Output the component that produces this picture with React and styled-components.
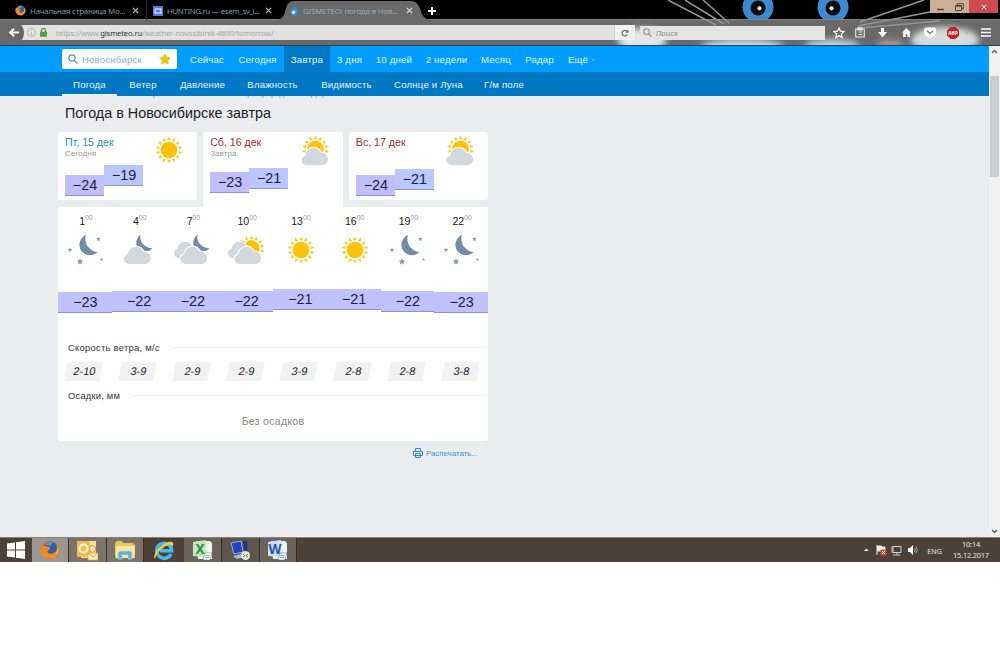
import React from "react";
import styled, { createGlobalStyle } from "styled-components";
import { FaStar } from "react-icons/fa";

const GlobalStyle = createGlobalStyle`
  * { box-sizing: border-box; }
  body {
    margin: 0;
    background: #fff;
    overflow: hidden;
    font-family: "Liberation Sans", Arial, sans-serif;
  }
  svg { display: block; flex: none; }
`;

const Screen = styled.div`
  width: 1000px;
  height: 562px;
  display: flex;
  flex-direction: column;
  overflow: hidden;
`;

/* ---------- browser ---------- */

const Browser = styled.div`
  position: relative;
  height: 46px;
  flex: none;
  background: #000;
  border-bottom: 1px solid #1d4560;
  font-family: "Noto Sans", sans-serif;
`;

const ThemeArt = styled.svg`
  position: absolute;
  top: 0;
  left: 0;
`;

const TabStrip = styled.div`
  position: relative;
  display: flex;
  height: 19px;
  padding-left: 8px;
`;

const Tab = styled.div`
  display: flex;
  align-items: center;
  width: ${(p) => p.$width}px;
  height: 20px;
  padding: 1px ${(p) => p.$right || 7}px 0 ${(p) => p.$left}px;
  gap: 4px;
  color: ${(p) => (p.$active ? "#93adc0" : "#7f98ab")};
  font-size: 7.9px;
  white-space: nowrap;
  border-right: ${(p) => (p.$divider ? "1px solid #26282b" : "0")};
`;

const TabTitle = styled.span`
  flex: 1;
  letter-spacing: ${(p) => p.$spacing || 0}px;
`;

const NewTab = styled.div`
  display: flex;
  align-items: center;
  padding: 2px 0 0 6px;
`;

const WindowButtons = styled.div`
  display: flex;
  height: 13px;
  margin-left: auto;
  margin-right: 2px;
`;

const WindowButton = styled.div`
  display: flex;
  align-items: center;
  justify-content: center;
  width: ${(p) => p.$width}px;
  background: ${(p) => (p.$close ? "#cf4b50" : "#cdae92")};
`;

const Toolbar = styled.div`
  position: relative;
  display: flex;
  align-items: center;
  height: 26px;
  padding-top: 1px;
`;

const BackButton = styled.div`
  position: relative;
  z-index: 1;
  display: flex;
  flex: none;
  align-items: center;
  justify-content: center;
  width: 24px;
  height: 24px;
  border-radius: 50%;
  background: #696969;
  padding-left: 3px;
`;

const UrlBar = styled.div`
  display: flex;
  flex: none;
  align-items: center;
  width: 615px;
  height: 15px;
  margin-left: -4px;
  padding-left: 7px;
  background: #e2e2e2;
  color: #a9a9a9;
  font-size: 7.6px;
  letter-spacing: -0.13px;

  b {
    font-weight: 400;
    color: #303030;
  }
`;

const UrlIcons = styled.div`
  display: flex;
  align-items: center;
  gap: 4px;
  width: 29px;
`;

const Reload = styled.div`
  display: flex;
  align-items: center;
  justify-content: center;
  width: 21px;
  height: 15px;
  margin-left: auto;
  border-left: 1px solid #d0d0d0;
  background: #f0f0f0;
`;

const SearchBar = styled.div`
  display: flex;
  flex: none;
  align-items: center;
  gap: 4px;
  width: 185px;
  height: 14px;
  margin-left: 5px;
  padding-left: 3px;
  background: #e4e4e4;
  color: #8b8b8b;
  font-size: 8px;
  font-style: italic;
`;

const ToolIcons = styled.div`
  display: flex;
  align-items: center;
  margin-left: 2px;
`;

const ToolIcon = styled.div`
  display: flex;
  flex: none;
  align-items: center;
  justify-content: center;
  width: ${(p) => p.$width}px;
`;

/* ---------- site ---------- */

const Nav = styled.div`
  display: flex;
  flex: none;
  height: 26px;
  padding-left: 62px;
  background: #009dff;
`;

const CityBox = styled.div`
  display: flex;
  align-items: center;
  width: 115px;
  height: 20px;
  margin: 3px 6px 0 0;
  padding: 0 6px;
  gap: 4px;
  border-radius: 2px;
  background: #fff;
  color: #86b0cc;
  font-size: 9.5px;
  letter-spacing: 0.22px;
`;

const CityName = styled.span`
  flex: 1;
`;

const NavItem = styled.div`
  display: flex;
  align-items: center;
  justify-content: center;
  gap: 3px;
  width: ${(p) => p.$width}px;
  padding-top: 1px;
  background: ${(p) => (p.$active ? "#0078c4" : "transparent")};
  color: #e4f5ff;
  font-size: 9.6px;
  letter-spacing: 0.2px;
  white-space: nowrap;
`;

const SubNav = styled.div`
  display: flex;
  flex: none;
  height: 24px;
  padding-left: 62px;
  background: #0077c3;
`;

const SubItem = styled(NavItem)`
  padding: 2px 0 0;
  background: none;
  border-bottom: 2px solid ${(p) => (p.$active ? "#e9f2f8" : "transparent")};
`;

const Page = styled.div`
  display: flex;
  flex: none;
  justify-content: space-between;
  height: 441px;
  background: #ebecee;
`;

const Content = styled.div`
  width: 430px;
  margin-left: 58px;
`;

const Crumbs = styled.div`
  display: flex;
  align-items: flex-end;
  height: 2px;
  padding-left: 59px;
  overflow: hidden;
  color: #8e9399;
  font-size: 7.9px;
  line-height: 9px;
  white-space: nowrap;
`;

const Title = styled.h1`
  margin: 0;
  height: 34px;
  padding: 5px 0 0 7px;
  color: #222;
  font-size: 14.350px;
  font-weight: 400;
  line-height: 20px;
  white-space: nowrap;
`;

const Days = styled.div`
  display: flex;
  gap: 6px;
  height: 75px;
`;

const DayCard = styled.div`
  display: grid;
  grid-template-columns: 1fr 30px;
  grid-template-rows: 33px 1fr;
  width: ${(p) => (p.$active ? 140 : 139.5)}px;
  height: ${(p) => (p.$active ? 76 : 68)}px;
  padding: 3px 12px 0 7px;
  border-radius: ${(p) => (p.$active ? "3px 3px 0 0" : "3px")};
  background: #fff;
`;

const DayName = styled.div`
  color: ${(p) => (p.$weekend ? "#ab2a2a" : "#2a8fb8")};
  font-size: 10.6px;
  line-height: 14px;
  white-space: nowrap;
`;

const DayNote = styled.div`
  color: #999;
  font-size: 8.1px;
  line-height: 9px;
`;

const DayTemps = styled.div`
  display: flex;
  align-items: flex-start;
`;

const Temp = styled.div`
  width: ${(p) => p.$width || 53.75}px;
  height: 21px;
  margin-top: ${(p) => p.$top}px;
  padding: 1px 0 0 1px;
  border-bottom: 1px solid #8e90cf;
  background: ${(p) => p.$color || "#bfc2ff"};
  color: #20203c;
  font-size: 14.4px;
  line-height: 19px;
  text-align: center;
`;

const Forecast = styled.div`
  height: 234px;
  padding-top: 7px;
  border-radius: 0 0 3px 3px;
  background: #fff;
`;

const Row = styled.div`
  display: grid;
  grid-template-columns: repeat(8, 53.75px);
  height: ${(p) => p.$height}px;
  padding-left: ${(p) => p.$shift || 0}px;
  justify-items: center;
`;

const Hour = styled.div`
  display: flex;
  color: #222;
  font-size: 10.6px;
  line-height: 14px;

  sup {
    color: #999;
    font-size: 6.8px;
    line-height: 8px;
  }
`;

const TempRow = styled.div`
  display: flex;
  height: 51px;
`;

const Label = styled.div`
  display: flex;
  align-items: center;
  gap: 11px;
  height: 14px;
  padding-left: 10px;
  color: #333;
  font-size: 9.4px;
  letter-spacing: ${(p) => p.$spacing}px;
  white-space: nowrap;

  &::after {
    content: "";
    flex: 1;
    height: 1px;
    background: #f1f1f2;
  }
`;

const Wind = styled.div`
  width: 35px;
  height: 19px;
  margin: 8px 2px 0 0;
  padding-left: 2px;
  transform: skewX(-10deg);
  background: #f2f2f3;
  color: #222;
  font-size: 11px;
  line-height: 19px;
  text-align: center;
`;

const NoRain = styled.div`
  padding-top: 12px;
  color: #888;
  font-size: 10.6px;
  line-height: 14px;
  letter-spacing: 0.25px;
  text-align: center;
`;

const Print = styled.div`
  display: flex;
  align-items: center;
  justify-content: flex-end;
  gap: 3px;
  height: 24px;
  padding-right: 10px;
  color: #3796d0;
  font-size: 7.9px;
`;

const ScrollBar = styled.div`
  display: flex;
  flex-direction: column;
  align-items: center;
  justify-content: space-between;
  width: 11px;
  height: 491px;
  margin-top: -50px;
  padding: 3px 0;
  background: #f0f0f0;
`;

const Thumb = styled.div`
  width: 9px;
  height: 101px;
  margin: 22px 0 auto;
  background: #cbcccd;
`;

/* ---------- taskbar ---------- */

const Taskbar = styled.div`
  display: flex;
  flex: none;
  height: 25px;
  background: #4c4037;
  border-top: 1px solid #85807b;
  color: #e8e6e4;
  font-family: "Noto Sans", sans-serif;
`;

const Task = styled.div`
  display: flex;
  align-items: center;
  justify-content: center;
  width: ${(p) => p.$width}px;
  background: ${(p) => p.$bg || "transparent"};
  border-right: 1px solid ${(p) => (p.$bg ? "#37302a" : "transparent")};
`;

const Tray = styled.div`
  display: flex;
  align-items: center;
  margin-left: auto;
  padding-right: 11px;
`;

const Lang = styled.span`
  margin: 1px 11px 0 9px;
  font-size: 7.2px;
`;

const Clock = styled.div`
  width: 36px;
  font-size: 7.4px;
  line-height: 11px;
  letter-spacing: -0.2px;
  text-align: center;
  white-space: nowrap;
`;

/* ---------- drawings ---------- */

const Close = ({ size = 7, color = "#b7bcc0" }) => (
  <svg width={size} height={size} viewBox="0 0 8 8">
    <path d="M1 1l6 6M7 1L1 7" stroke={color} strokeWidth="1.3" />
  </svg>
);

const FirefoxIcon = ({ size }) => (
  <svg width={size} height={size} viewBox="0 0 20 20">
    <circle cx="10" cy="10" r="9" fill="#e5641a" />
    <circle cx="10.5" cy="8" r="6.4" fill="#2b61a8" />
    <path d="M5 5c2-3 6-4 9-2-2 0-3 1-3 3z" fill="#5c9ad6" />
    <path
      d="M1.5 5c1 1 2 1 4 1 2 0 3 1 5 2-1 2-3 2-3 4 2 3 6 2 9-1 1-2 1-4 0-6 3 3 3 7 1 10-4 5-11 5-15 0C.5 12 .7 8 1.5 5z"
      fill="#f08b20"
    />
    <path d="M16.5 5c2 4 1 8-2 10 4-1 5-6 2-10z" fill="#ffd44a" />
  </svg>
);

const RAYS = Array.from({ length: 14 }, (_, i) => (i * 360) / 14);

const SunShape = ({ cx, cy, scale = 1 }) => (
  <g transform={`translate(${cx} ${cy}) scale(${scale})`}>
    <circle r="8.7" fill="#ffc20a" />
    {RAYS.map((a) => (
      <path key={a} d="M-1.7 -10.2L0 -14.4L1.7 -10.2Z" fill="#f2cd24" transform={`rotate(${a})`} />
    ))}
  </g>
);

const CLOUD =
  "M5.5 18C2.3 18 0 15.9 0 13.1c0-2.3 1.5-4 3.7-4.6C4 4 7.5.9 12 .9c3.5 0 6.4 1.9 7.7 4.8C23.5 5.4 26.5 8.1 26.5 12c0 3.5-2.5 6-6 6z";

const Cloud = ({ x, y, scale = 1, outline }) => (
  <path
    d={CLOUD}
    transform={`translate(${x} ${y}) scale(${scale})`}
    fill="#d1d8de"
    stroke={outline ? "#fff" : "none"}
    strokeWidth="2"
    paintOrder="stroke"
  />
);

const STAR = "M0-2.9L.9-1 3-.8 1.4.6 1.9 2.7 0 1.6-1.9 2.7-1.4.6-3-.8-.9-1Z";

const MoonStars = () => (
  <>
    <path d="M21 1A10.5 10.5 0 1 0 32.5 18A13 13 0 0 1 21 1Z" fill="#718ca8" />
    {[[33.3, 5, 0.75], [5, 15.8, 0.75], [15, 27.5, 1.1], [36.5, 25.5, 0.5]].map(([x, y, s]) => (
      <path key={x} d={STAR} transform={`translate(${x} ${y}) scale(${s})`} fill="#8296ac" />
    ))}
  </>
);

const MoonBehind = ({ x }) => (
  <path
    d="M4.5 0A10 10 0 0 0 2 14C6 18 13 18 16.5 14C9 13 3 8 4.5 0Z"
    transform={`translate(${x} .5)`}
    fill="#718ca8"
  />
);

const WeatherIcon = ({ kind }) => (
  <svg width="42" height="32" viewBox="0 0 42 32">
    {kind === "sun" && <SunShape cx={21} cy={16} scale={0.96} />}
    {kind === "night" && <MoonStars />}
    {kind === "nightCloud" && (
      <>
        <MoonBehind x={17} />
        <Cloud x={5} y={12} outline />
      </>
    )}
    {kind === "nightClouds" && (
      <>
        <MoonBehind x={21} />
        <Cloud x={2} y={7} scale={0.94} outline />
        <Cloud x={8.5} y={12} outline />
      </>
    )}
    {kind === "dayClouds" && (
      <>
        <SunShape cx={25.5} cy={14.5} scale={0.94} />
        <Cloud x={2} y={7} scale={0.94} outline />
        <Cloud x={8.5} y={12} outline />
      </>
    )}
    {kind === "sunCloud" && (
      <>
        <SunShape cx={21.5} cy={15} scale={0.96} />
        <Cloud x={7.5} y={13.2} outline />
      </>
    )}
  </svg>
);

const DayIcon = styled.div`
  margin: -1px 0 0 -7px;
`;

const Magnifier = ({ size, color }) => (
  <svg width={size} height={size} viewBox="0 0 10 10" fill="none" stroke={color} strokeWidth="1.2">
    <circle cx="4" cy="4" r="3.2" />
    <path d="M6.4 6.4L9.5 9.5" />
  </svg>
);

const CatTheme = () => (
  <ThemeArt width="1000" height="45" viewBox="0 0 1000 45">
    <defs>
      <filter id="fur" x="-20%" y="-50%" width="140%" height="200%">
        <feGaussianBlur stdDeviation="3" />
      </filter>
      <clipPath id="bar">
        <rect y="19" width="1000" height="26" />
      </clipPath>
    </defs>
    {[758, 833].map((x) => (
      <g key={x}>
        <circle cx={x} cy="7" r="15.5" fill="#3f87cf" />
        <circle cx={x} cy="8" r="7.5" fill="#070b10" />
        <circle cx={x === 758 ? 759.5 : 831.5} cy="8.3" r="2.1" fill="#f3ead6" />
      </g>
    ))}
    <rect y="19" width="1000" height="26" fill="#696969" />
    <rect y="19" width="1000" height="1" fill="#858585" />
    {/* selected tab */}
    <path d="M277 20Q284 19 285.500 10Q287 1 294 1H411Q418 1 420.500 10Q422.500 19 430 20Z" fill="#696969" />
    <g clipPath="url(#bar)">
      <g filter="url(#fur)">
        <ellipse cx="642" cy="40" rx="24" ry="12" fill="#dfe9e9" />
        <ellipse cx="742" cy="47" rx="42" ry="8" fill="#c9d8da" />
        <ellipse cx="832" cy="47" rx="28" ry="8" fill="#c4ced0" />
        <ellipse cx="945" cy="40" rx="34" ry="13" fill="#d5dddc" />
        <ellipse cx="890" cy="44" rx="14" ry="4" fill="#b09a94" />
      </g>
    </g>
    <g stroke="#969696" strokeWidth="1.5">
      <path d="M668 0L716 25M685 0L724 24M703 0L729 23" />
      <path d="M924 0L860 22M930 12L858 26M940 21L860 28" />
    </g>
  </ThemeArt>
);

const toolbarIcons = [
  [24, <svg width="12" height="12" viewBox="0 0 12 12"><path d="M6 1l1.5 3.2 3.5.4-2.6 2.4.7 3.5L6 8.8 2.9 10.5 3.6 7 1 4.6l3.5-.4z" fill="none" stroke="#fff" strokeWidth="1.2" /></svg>],
  [18, <svg width="10" height="11" viewBox="0 0 10 11"><path d="M.7 2h8.6v8H.7zM3 .7h4V3H3zM3.5 5h4M3.5 7.5h4" fill="none" stroke="#ededed" strokeWidth="1.1" /></svg>],
  [27, <svg width="9" height="10" viewBox="0 0 9 10"><path d="M3 0h3v4h3L4.5 9.5 0 4h3z" fill="#fff" /></svg>],
  [20, <svg width="9" height="9" viewBox="0 0 10 10"><path d="M5 0l5 5H8.7v5H6V7H4v3H1.3V5H0z" fill="#fff" /></svg>],
  [27, <svg width="12" height="11" viewBox="0 0 12 11"><path d="M1.500.5h9L12 2v3a6 5.500 0 0 1-12 0V2z" fill="#fff" /><path d="M3 3.700l3 2.800 3-2.800" fill="none" stroke="#777" strokeWidth="1.4" /></svg>],
  [20, <svg width="12" height="12" viewBox="0 0 12 12"><path d="M3.5 0h5L12 3.5v5L8.5 12h-5L0 8.5v-5z" fill="#c6202a" /><text x="6" y="7.8" textAnchor="middle" fontSize="4.8" fontWeight="700" fill="#fff">ABP</text></svg>],
  [8, <svg width="6" height="5" viewBox="0 0 5 4"><path d="M.5.5l2 2.5 2-2.5" fill="none" stroke="#a9b1b1" /></svg>],
  [29, <svg width="10" height="9" viewBox="0 0 10 9"><path d="M0 1h10M0 4.5h10M0 8h10" stroke="#fff" strokeWidth="1.7" /></svg>],
];

const navItems = [
  ["Сейчас", 48],
  ["Сегодня", 53],
  ["Завтра", 46],
  ["3 дня", 39],
  ["10 дней", 50],
  ["2 недели", 55],
  ["Месяц", 44],
  ["Радар", 43],
];

const subItems = [
  ["Погода", 55],
  ["Ветер", 52],
  ["Давление", 67],
  ["Влажность", 73],
  ["Видимость", 75],
  ["Солнце и Луна", 89],
  ["Г/м поле", 62],
];

const days = [
  { name: "Пт, 15 дек", note: "Сегодня", icon: "sun", low: ["−24", 7], high: ["−19", -3] },
  { name: "Сб, 16 дек", note: "Завтра", icon: "sunCloud", weekend: true, active: true, low: ["−23", 4], high: ["−21", 0] },
  { name: "Вс, 17 дек", icon: "sunCloud", weekend: true, low: ["−24", 7], high: ["−21", 1] },
];

const hours = [
  { hour: 1, icon: "night", temp: "−23", top: 3, wind: "2-10" },
  { hour: 4, icon: "nightCloud", temp: "−22", top: 1.5, wind: "3-9" },
  { hour: 7, icon: "nightClouds", temp: "−22", top: 1.5, wind: "2-9" },
  { hour: 10, icon: "dayClouds", temp: "−22", top: 1.5, wind: "2-9" },
  { hour: 13, icon: "sun", temp: "−21", top: 0, wind: "3-9" },
  { hour: 16, icon: "sun", temp: "−21", top: 0, wind: "2-8" },
  { hour: 19, icon: "night", temp: "−22", top: 1.5, wind: "2-8" },
  { hour: 22, icon: "night", temp: "−23", top: 3, wind: "3-8" },
];

const WindowsIcon = () => (
  <svg width="18" height="18" viewBox="0 0 18 18">
    <path d="M0 2.5L8 1.4V8.5H0zM9 1.2L18 0v8.5H9zM0 9.5h8v7.1L0 15.500zM9 9.5h9V18L9 16.8z" fill="#fff" />
  </svg>
);

const OutlookIcon = () => (
  <svg width="21" height="21" viewBox="0 0 21 21">
    <path d="M4 1h15v17H4z" fill="#f7dc9a" />
    <path d="M0 1h13v16H0z" fill="#f1bd50" />
    <circle cx="6.5" cy="8.5" r="4" fill="none" stroke="#fff6df" strokeWidth="2.2" />
    <circle cx="15.5" cy="9" r="3.3" fill="#fae6b0" stroke="#dc9c2a" />
    <path d="M11 13h10v7H11z" fill="#fff0bf" stroke="#dda83e" strokeWidth=".8" />
    <path d="M11 13l5 4 5-4" fill="none" stroke="#dda83e" />
  </svg>
);

const FolderIcon = () => (
  <svg width="22" height="21" viewBox="0 0 22 21">
    <path d="M1 3l2-2h5l1 2h10l2 2v13H1z" fill="#e9c95b" />
    <path d="M2 6h19l-1 12H2z" fill="#f9e99b" />
    <path d="M4 19v-5q0-3 3-3h8q3 0 3 3v5h-4v-4H8v4z" fill="#62aedb" stroke="#b7e0f4" strokeWidth=".7" />
  </svg>
);

const ExplorerIcon = () => (
  <svg width="21" height="21" viewBox="0 0 21 21">
    <path d="M18 14a7.5 7.5 0 1 1 .7-3.3H7" fill="none" stroke="#49b9ec" strokeWidth="3.6" />
    <path d="M2 19C-2 15 11 0 19 2c2 .5 1.500 3 0 5 0-3-3-3-7-.5C6 10 2 17 2 19z" fill="#f0cd48" />
  </svg>
);

const OfficeIcon = ({ letter, color, tint }) => (
  <svg width="20" height="21" viewBox="0 0 20 21">
    <path d="M3 1h14l2 2v16H5z" fill="#eef4ef" />
    <path d="M0 2l13-2v17L0 16z" fill={tint} />
    <text x="7" y="14" textAnchor="middle" fontSize="13.500" fontWeight="700" fill={color}>
      {letter}
    </text>
    <path d="M12 13h7l-2 7h-7z" fill="#fff" stroke={color} strokeWidth=".5" />
    <path d="M12.5 15.5h4M12 17.5h4" stroke={color} strokeWidth=".6" />
  </svg>
);

const RemoteIcon = () => (
  <svg width="21" height="21" viewBox="0 0 21 21">
    <path d="M1 3l10-2 2 11-9 2z" fill="#2443c0" stroke="#9cacde" />
    <path d="M13 1h4l1 13h-4z" fill="#22388e" />
    <path d="M3 16l9-2 3 3-8 2z" fill="#aebbd1" />
    <circle cx="15.5" cy="15.5" r="4.5" fill="#e5ece0" />
    <path d="M13 14l2 1.5-2 1.5M18 14l-2 1.5 2 1.5" fill="none" stroke="#5d8c4c" />
  </svg>
);

export default function App() {
  return (
    <>
      <GlobalStyle />
      <Screen>
        <Browser>
          <CatTheme />
          <TabStrip>
            <Tab $width={139} $left={7} $divider>
              <FirefoxIcon size={11} />
              <TabTitle $spacing={-0.2}>Начальная страница Mo...</TabTitle>
              <Close />
            </Tab>
            <Tab $width={136} $left={6} $right={11}>
              <svg width="10" height="10" viewBox="0 0 10 10">
                <rect width="10" height="10" fill="#4f79e5" />
                <rect x="2" y="3" width="6" height="4" fill="none" stroke="#fff" />
              </svg>
              <TabTitle $spacing={-0.38}>HUNTING.ru — esem_sv_i...</TabTitle>
              <Close />
            </Tab>
            <Tab $width={138} $left={7} $right={8} $active>
              <svg width="9" height="10" viewBox="0 0 9 10">
                <path d="M4.5 0C7 3 8 4.5 8 6.3a3.5 3.5 0 0 1-7 0C1 4.5 2 3 4.500 0z" fill="#2f8fe0" />
                <circle cx="3.5" cy="6.3" r="1.8" fill="#eef8ff" />
              </svg>
              <TabTitle $spacing={-0.2}>GISMETEO: погода в Нов...</TabTitle>
              <Close color="#e0e0e0" />
            </Tab>
            <NewTab>
              <svg width="10" height="10" viewBox="0 0 10 10">
                <path d="M5 1v8M1 5h8" stroke="#fff" strokeWidth="2" />
              </svg>
            </NewTab>
            <WindowButtons>
              <WindowButton $width={20}>
                <svg width="8" height="8" viewBox="0 0 8 8">
                  <path d="M1 6.5h7" stroke="#54483c" strokeWidth="1.5" />
                </svg>
              </WindowButton>
              <WindowButton $width={19}>
                <svg width="9" height="8" viewBox="0 0 9 8" fill="none" stroke="#54483c">
                  <path d="M2 2V.7h6.3V6H7M.5 2.5h6v5h-6zM.5 3.3h6" />
                </svg>
              </WindowButton>
              <WindowButton $width={29} $close>
                <Close size={6} color="#fff" />
              </WindowButton>
            </WindowButtons>
          </TabStrip>
          <Toolbar>
            <BackButton>
              <svg width="10" height="9" viewBox="0 0 10 9">
                <path d="M5 .7L1.2 4.5 5 8.3M1.5 4.5H10" fill="none" stroke="#fff" strokeWidth="2" />
              </svg>
            </BackButton>
            <UrlBar>
              <UrlIcons>
                <svg width="9" height="9" viewBox="0 0 9 9" fill="none" stroke="#b2b2b2" strokeWidth=".9">
                  <circle cx="4.5" cy="4.5" r="4" />
                  <path d="M4.5 2v1M4.5 4v3" />
                </svg>
                <svg width="7" height="9" viewBox="0 0 7 9">
                  <path d="M1.5 4V2.5a2 2 0 0 1 4 0V4" fill="none" stroke="#4da536" strokeWidth="1.3" />
                  <rect y="3.7" width="7" height="5" fill="#4da536" />
                </svg>
              </UrlIcons>
              <span>
                https://www.<b>gismeteo.ru</b>/weather-novosibirsk-4690/tomorrow/
              </span>
              <Reload>
                <svg width="8" height="8" viewBox="0 0 8 8">
                  <path d="M6.3 5.5A2.8 2.8 0 1 1 6 2.3" fill="none" stroke="#666" strokeWidth="1.2" />
                  <path d="M7.500.5v3.300H4.300z" fill="#666" />
                </svg>
              </Reload>
            </UrlBar>
            <SearchBar>
              <Magnifier size={9} color="#8d8d8d" />
              Поиск
            </SearchBar>
            <ToolIcons>
              {toolbarIcons.map(([width, icon], i) => (
                <ToolIcon key={i} $width={width}>
                  {icon}
                </ToolIcon>
              ))}
            </ToolIcons>
          </Toolbar>
        </Browser>

        <Nav>
          <CityBox>
            <Magnifier size={10} color="#4b93bd" />
            <CityName>Новосибирск</CityName>
            <FaStar size={12} color="#efc21d" />
          </CityBox>
          {navItems.map(([text, width]) => (
            <NavItem key={text} $width={width} $active={text === "Завтра"}>
              {text}
            </NavItem>
          ))}
          <NavItem $width={42}>
            Ещё
            <svg width="5" height="4" viewBox="0 0 5 4">
              <path d="M.5.7l2 2 2-2" fill="none" stroke="#7accff" />
            </svg>
          </NavItem>
        </Nav>
        <SubNav>
          {subItems.map(([text, width]) => (
            <SubItem key={text} $width={width} $active={text === "Погода"}>
              {text}
            </SubItem>
          ))}
        </SubNav>

        <Page>
          <Content>
            <Crumbs>Новосибирская область / Новосибирск (городской округ)</Crumbs>
            <Title>Погода в Новосибирске завтра</Title>
            <Days>
              {days.map((day) => (
                <DayCard key={day.name} $active={day.active}>
                  <div>
                    <DayName $weekend={day.weekend}>{day.name}</DayName>
                    <DayNote>{day.note}</DayNote>
                  </div>
                  <DayIcon>
                    <WeatherIcon kind={day.icon} />
                  </DayIcon>
                  <DayTemps>
                    <Temp $width={39} $top={day.low[1]} $color="#c4bdfb">
                      {day.low[0]}
                    </Temp>
                    <Temp $width={39} $top={day.high[1]} $color="#b9c7ff">
                      {day.high[0]}
                    </Temp>
                  </DayTemps>
                </DayCard>
              ))}
            </Days>
            <Forecast>
              <Row $height={20} $shift={1}>
                {hours.map((h) => (
                  <Hour key={h.hour}>
                    {h.hour}
                    <sup>00</sup>
                  </Hour>
                ))}
              </Row>
              <Row $height={55} $shift={1}>
                {hours.map((h) => (
                  <WeatherIcon key={h.hour} kind={h.icon} />
                ))}
              </Row>
              <TempRow>
                {hours.map((h) => (
                  <Temp key={h.hour} $top={h.top}>
                    {h.temp}
                  </Temp>
                ))}
              </TempRow>
              <Label $spacing={0.28}>Скорость ветра, м/с</Label>
              <Row $height={34}>
                {hours.map((h) => (
                  <Wind key={h.hour}>{h.wind}</Wind>
                ))}
              </Row>
              <Label $spacing={0.2}>Осадки, мм</Label>
              <NoRain>Без осадков</NoRain>
            </Forecast>
            <Print>
              <svg width="10" height="10" viewBox="0 0 10 10" fill="none" stroke="#2d8ec9">
                <path d="M2.5 3V.5h5V3M2.5 7.5H.5V3.5h9v4h-2M2.5 5.5h5v4h-5zM3 7.5h4" />
              </svg>
              Распечатать...
            </Print>
          </Content>
          <ScrollBar>
            <svg width="7" height="5" viewBox="0 0 7 5">
              <path d="M1 4l2.5-2.5L6 4" fill="none" stroke="#555" strokeWidth="1.3" />
            </svg>
            <Thumb />
            <svg width="7" height="5" viewBox="0 0 7 5">
              <path d="M1 1l2.5 2.5L6 1" fill="none" stroke="#555" strokeWidth="1.3" />
            </svg>
          </ScrollBar>
        </Page>

        <Taskbar>
          <Task $width={32}><WindowsIcon /></Task>
          <Task $width={37} $bg="#9b9692"><FirefoxIcon size={20} /></Task>
          <Task $width={38} $bg="#7b736c"><OutlookIcon /></Task>
          <Task $width={37} $bg="#7b736c"><FolderIcon /></Task>
          <Task $width={40}><ExplorerIcon /></Task>
          <Task $width={38} $bg="#6b625a">
            <OfficeIcon letter="X" color="#2d8b43" tint="#c5e5bf" />
          </Task>
          <Task $width={38} $bg="#5e554d"><RemoteIcon /></Task>
          <Task $width={37} $bg="#6b625a">
            <OfficeIcon letter="W" color="#2458a7" tint="#cfe0f6" />
          </Task>
          <Tray>
            <svg width="54" height="14" viewBox="0 0 54 14">
              <path d="M0 8l2.3-2.5L4.6 8z" fill="#eee" />
              <path d="M13 2v10M13 3h4l1 1h3v5h-3l-1-1h-4" fill="#eee" stroke="#eee" />
              <rect x="16.5" y="6.5" width="6" height="6" fill="#d0473b" />
              <path d="M18 8l3 3M21 8l-3 3" stroke="#fff" />
              <path d="M29 3.5h8v6h-8zM33 9.5v2M29 12h7M28 3v7" fill="none" stroke="#d4d1ce" />
              <path d="M44 5h2l3-3v10l-3-3h-2z" fill="#fff" />
              <path d="M50.5 5q1.5 2 0 4M52 3.5q2.5 3.5 0 7" fill="none" stroke="#c5c0bc" strokeWidth=".8" />
            </svg>
            <Lang>ENG</Lang>
            <Clock>
              10:14
              <br />
              15.12.2017
            </Clock>
          </Tray>
        </Taskbar>
      </Screen>
    </>
  );
}
